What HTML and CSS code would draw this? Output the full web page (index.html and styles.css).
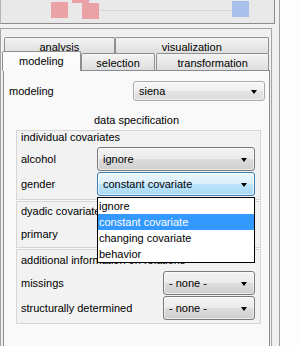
FILE: index.html
```html
<!DOCTYPE html>
<html lang="en">
<head>
    <meta charset="UTF-8">
    <meta name="viewport" content="width=device-width, initial-scale=1.0">
    <title>Model specification</title>
    <link rel="stylesheet" href="styles.css">
</head>
<body>
    <div class="window">
        <div class="main">
            <div class="canvas">
                <div class="edge"></div>
                <div class="node node-a"></div>
                <div class="node node-b"></div>
                <div class="node node-c"></div>
                <div class="node node-d"></div>
            </div>

            <div class="frame">
                <div class="tab-row back">
                    <div class="tab tab-analysis">analysis</div>
                    <div class="tab tab-visualization">visualization</div>
                </div>
                <div class="tab-row front">
                    <div class="tab tab-modeling active">modeling</div>
                    <div class="tab tab-selection">selection</div>
                    <div class="tab tab-transformation">transformation</div>
                </div>

                <div class="panel">
                    <div class="top-row">
                        <span class="label">modeling</span>
                        <div class="combo combo-light">siena</div>
                    </div>

                    <div class="section-title">data specification</div>

                    <div class="group group-individual">
                        <div class="group-title">individual covariates</div>
                        <div class="row">
                            <span class="label">alcohol</span>
                            <div class="combo wide">ignore</div>
                        </div>
                        <div class="row row-tight">
                            <span class="label">gender</span>
                            <div class="field">
                                <div class="combo wide hot">constant covariate</div>
                                <ul class="list">
                                    <li>ignore</li>
                                    <li class="selected">constant covariate</li>
                                    <li>changing covariate</li>
                                    <li>behavior</li>
                                </ul>
                            </div>
                        </div>
                    </div>

                    <div class="group group-dyadic">
                        <div class="group-title">dyadic covariates</div>
                        <div class="row">
                            <span class="label">primary</span>
                            <div class="combo wide">ignore</div>
                        </div>
                    </div>

                    <div class="group group-relations">
                        <div class="group-title">additional information on relations</div>
                        <div class="row">
                            <span class="label">missings</span>
                            <div class="combo narrow">- none -</div>
                        </div>
                        <div class="row row-tight">
                            <span class="label">structurally determined</span>
                            <div class="combo narrow">- none -</div>
                        </div>
                    </div>
                </div>
            </div>
        </div>
        <div class="side"></div>
    </div>
</body>
</html>
```

FILE: styles.css
```css
* {
    box-sizing: border-box;
}

html,
body {
    margin: 0;
    padding: 0;
}

body {
    width: 300px;
    height: 346px;
    overflow: hidden;
    background-color: #f0f0f0;
    color: #000000;
    font-family: "Liberation Sans", Arial, sans-serif;
    font-size: 11px;
}

.window {
    display: flex;
    height: 346px;
}

.main {
    width: 279px;
}

.side {
    flex: 1;
    border-left: 1px solid #a0a0a0;
    background-color: #fdfdfd;
}

/* network preview at the top */
.canvas {
    position: relative;
    width: 275px;
    height: 24px;
    overflow: hidden;
    background-color: #e9e9e9;
    border-left: 1px solid #b4b4b4;
    border-right: 1px solid #8c8c8c;
    border-bottom: 1px solid #8c8c8c;
}

.edge {
    position: absolute;
    left: 98px;
    top: 10px;
    width: 133px;
    height: 1px;
    background-color: #d6d6d6;
}

.node {
    position: absolute;
    width: 17px;
    height: 16px;
    background-color: #eba2a6;
}

.node-a { left: 50px; top: 2px; }
.node-b { left: 71px; top: -13px; }
.node-c { left: 81px; top: 3px; }

.node-d {
    left: 231px;
    top: 1px;
    background-color: #a9c0ea;
}

/* tabs */
.frame {
    width: 272px;
    height: 330px;
    margin-top: 4px;
    padding: 8px 2px 0 1px;
    border: 1px solid #a4a4a4;
    border-bottom: none;
}

.tab-row {
    display: flex;
}

.tab-row.back {
    height: 15px;
    margin-left: 2px;
}

.tab-row.front {
    position: relative;
    z-index: 2;
    height: 18px;
    align-items: flex-end;
}

.tab {
    border: 1px solid #8e8f8f;
    border-bottom: none;
    border-radius: 2px 2px 0 0;
    background: linear-gradient(#f4f4f4, #dedede);
    text-align: center;
    line-height: 12px;
    white-space: nowrap;
}

.back .tab {
    height: 16px;
    padding-top: 3px;
}

.front .tab {
    height: 17px;
    padding-top: 3px;
}

.front .tab.active {
    height: 20px;
    margin-bottom: -1px;
    background: #fbfbfb;
}

.tab-analysis { width: 111px; }
.tab-visualization { width: 155px; }
.tab-modeling { width: 79px; }
.tab-selection { width: 75px; }

.tab-transformation {
    width: 113px;
    margin-left: 1px;
}

.panel {
    width: 267px;
    height: 290px;
    margin-left: 1px;
    border: 1px solid #898c95;
    background-color: #f9f9f9;
    padding-top: 10px;
}

.top-row {
    display: flex;
    align-items: center;
    height: 20px;
    margin: 0 4px 0 5px;
}

.label {
    flex: 1;
    white-space: nowrap;
}

.section-title {
    margin-top: 12px;
    line-height: 14px;
    text-align: center;
}

/* group boxes */
.group {
    margin: 0 8px 0 12px;
    padding: 0 5px 3px 4px;
    border: 1px solid #d6d6d6;
    background-color: #f2f2f2;
}

.group-title {
    line-height: 12px;
    white-space: nowrap;
}

.group-individual {
    margin-top: 3px;
}

.group-dyadic {
    margin-top: 1px;
    padding-top: 3px;
    padding-bottom: 1px;
}

.group-relations {
    margin-top: 1px;
    padding-top: 4px;
}

.row {
    display: flex;
    align-items: center;
    height: 24px;
    margin-top: 4px;
}

.group-dyadic .row,
.group-relations .row {
    margin-top: 5px;
}

.group .row-tight,
.group-relations .row-tight {
    margin-top: 1px;
}

/* combo boxes */
.field {
    position: relative;
    height: 24px;
}

.combo {
    display: flex;
    align-items: center;
    justify-content: space-between;
    height: 100%;
    padding: 0 7px 0 5px;
    border: 1px solid #7a7a7a;
    border-radius: 3px;
    background: linear-gradient(#f3f3f3 0%, #ebebeb 50%, #dddddd 50%, #cfcfcf 100%);
    box-shadow: inset 0 0 0 1px rgba(255, 255, 255, 0.6);
    white-space: nowrap;
}

.combo::after {
    content: "";
    width: 0;
    height: 0;
    margin-top: 2px;
    border-left: 3.5px solid transparent;
    border-right: 3.5px solid transparent;
    border-top: 4px solid #000000;
}

.combo-light {
    width: 132px;
    border-color: #a9a9a9;
    background: linear-gradient(#f7f7f7 0%, #efefef 50%, #e5e5e5 50%, #dcdcdc 100%);
}

.wide {
    width: 158px;
}

.narrow {
    width: 92px;
}

.combo.hot {
    border-color: #3c7fb1;
    background: linear-gradient(#eaf6fd 0%, #d9f0fc 50%, #bee6fd 50%, #a7d9f5 100%);
}

/* open drop-down list */
.list {
    position: absolute;
    left: 0;
    top: calc(100% + 1px);
    z-index: 5;
    width: 158px;
    margin: 0;
    padding: 0;
    list-style: none;
    border: 1px solid #000000;
    background-color: #ffffff;
}

.list li {
    height: 16px;
    padding-left: 1px;
    line-height: 16px;
    white-space: nowrap;
}

.list li.selected {
    background-color: #3399ff;
    color: #ffffff;
}
```
